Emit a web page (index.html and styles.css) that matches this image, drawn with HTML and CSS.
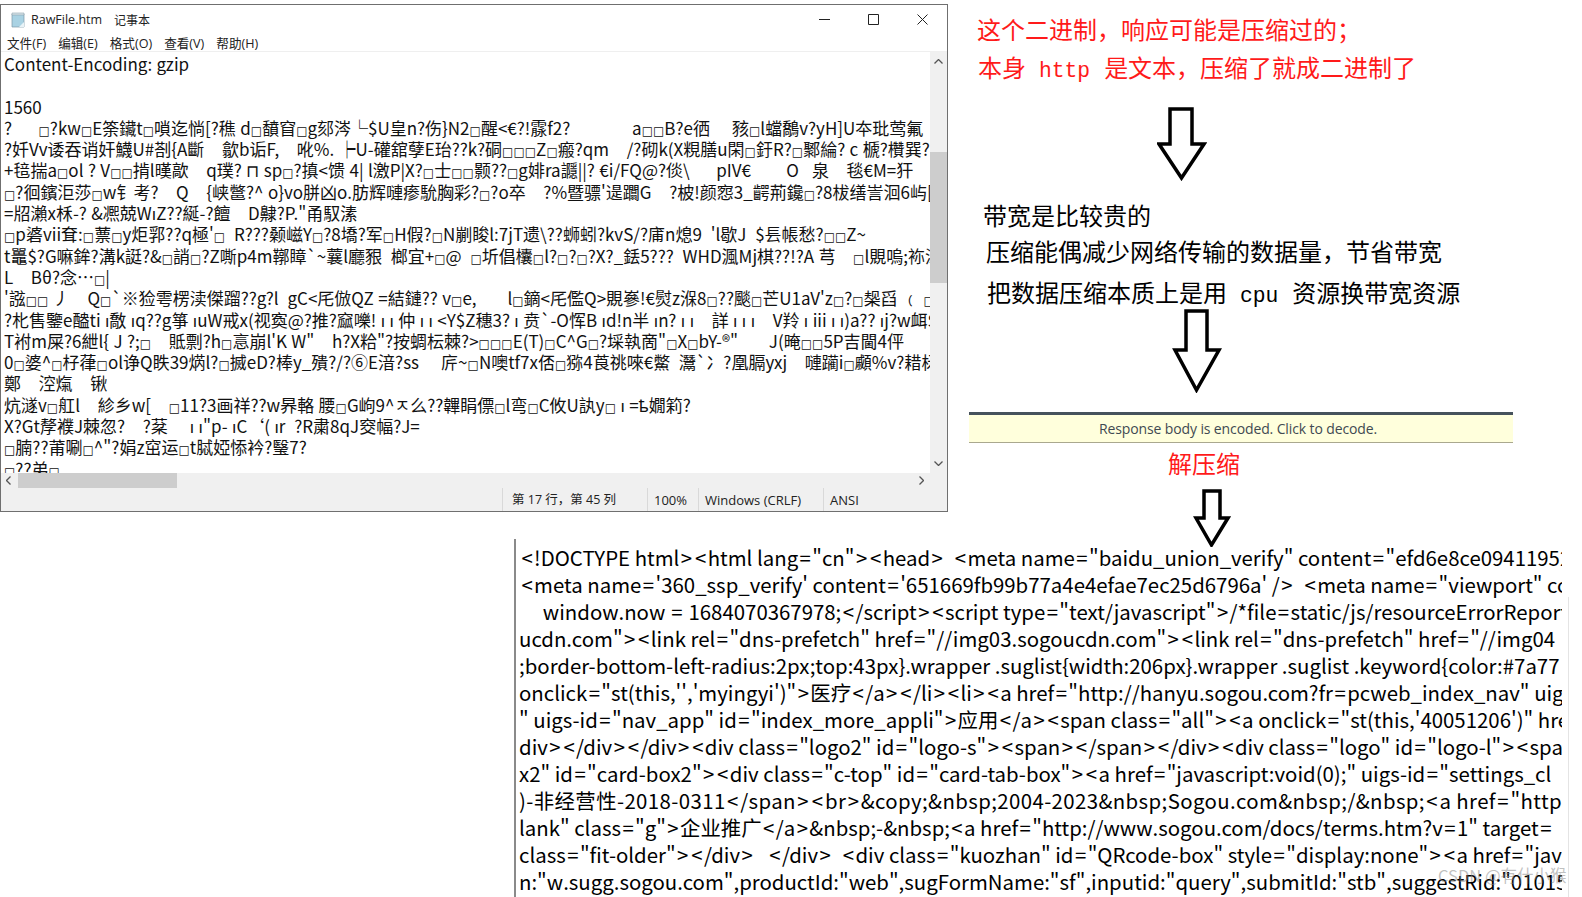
FILE: index.html
```html
<!DOCTYPE html>
<html lang="zh-CN">
<head>
<meta charset="utf-8">
<title>RawFile</title>
<link rel="stylesheet" href="styles.css">
</head>
<body>
<main class="canvas">
  <section class="notepad">
    <header class="titlebar">
      <svg class="file-icon" viewBox="0 0 16 16" width="16" height="16"><path d="M2 2h12v13H2z" fill="#a9d2e3" stroke="#7b9aa8" stroke-width=".7"/><path d="M2 1h12v2H2z" fill="#d8e4ea" stroke="#8ea3ad" stroke-width=".6"/><path d="M9 15l5-5v5z" fill="#e9f3f7"/></svg>
      <span class="title-file">RawFile.htm</span>
      <span class="title-app">记事本</span>
      <span class="win-btns">
        <svg viewBox="0 0 11 11" width="11" height="11"><path d="M0 5.5h11" stroke="#222" fill="none"/></svg>
        <svg viewBox="0 0 11 11" width="11" height="11"><path d="M.5.5h10v10H.5z" stroke="#222" fill="none"/></svg>
        <svg viewBox="0 0 11 11" width="11" height="11"><path d="M.5.5l10 10M10.5.5l-10 10" stroke="#222" fill="none"/></svg>
      </span>
    </header>
    <nav class="menubar"><span>文件(F)</span><span>编辑(E)</span><span>格式(O)</span><span>查看(V)</span><span>帮助(H)</span></nav>
    <div class="editor">
      <div class="doc">
<div class="ln">Content-Encoding: gzip</div>
<div class="ln"> </div>
<div class="ln">1560</div>
<div class="ln">?      <i class="b">□</i>?kw<i class="b">□</i>E筡鑶t<i class="b">□</i>嗩迄惝[?穛 d<i class="b">□</i>馩窅<i class="b">□</i>g郂涔└$U皇n?伤}N2<i class="b">□</i>醒&lt;€?!霡f2?              a<i class="b">□</i><i class="b">□</i>B?e徆     豥<i class="b">□</i>l蟷鷮v?yH]U夲玭莺氟</div>
<div class="ln">?奷Vv诿吞诮奸鱴U#剳{A斷    歙b诟F,    吪%. ┝U-礶舘孽E珆??k?硐<i class="b">□</i><i class="b">□</i><i class="b">□</i>Z<i class="b">□</i>瘢?qm    /?砌k(X粯膳u閑<i class="b">□</i>釪R?<i class="b">□</i>鄹綸? c 榹?欑巽?–;</div>
<div class="ln">+毰揣a<i class="b">□</i>ol ? V<i class="b">□</i><i class="b">□</i>掯l暵歊    q璞? ⊓ sp<i class="b">□</i>?搷&lt;馈 4| l激P|X?<i class="b">□</i>士<i class="b">□</i><i class="b">□</i>颢??<i class="b">□</i>g婔ra讔||? €i/FQ@?倓\      pIV€        O   泉    毯€M=犴</div>
<div class="ln"><i class="b">□</i>?徊鑌洰莎<i class="b">□</i>w钅考?    Q    {峡鄨?^ o}vo胼凶o.肪辉嗹瘆馻胸彩?<i class="b">□</i>?o卒    ?%暨骠'遈躢G    ?柀!颜惌3_齶荊鑱<i class="b">□</i>?8柭缮訔洄6屿[?</div>
<div class="ln">=牊瀨x柇-? &amp;凞兢WıZ??綖-?饘    D齂?P."甬馭溸</div>
<div class="ln"><i class="b">□</i>p碆vii耷:<i class="b">□</i>蔈<i class="b">□</i>y炬郛??q極'<i class="b">□</i>  R???颡嵫Y<i class="b">□</i>?8墧?军<i class="b">□</i>H假?<i class="b">□</i>N剻睃l:7jT遗\??蛳蚓?kvS/?庯n熄9  'l歇J  $镸帳愁?<i class="b">□</i><i class="b">□</i>Z~</div>
<div class="ln">t鼉$?G嘛鉾?溝k誔?&amp;<i class="b">□</i>誚<i class="b">□</i>?Z嘶p4m鞹瞕`~蘘l廳豤  榔宜+<i class="b">□</i>@  <i class="b">□</i>圻倡欜<i class="b">□</i>l?<i class="b">□</i>?<i class="b">□</i>?X?_銩5???  WHD渢Mj棋??!?A 芎    <i class="b">□</i>l覞嗚;袮洣</div>
<div class="ln">L    Bθ?念⋯<i class="b">□</i>|</div>
<div class="ln">'誸<i class="b">□</i><i class="b">□</i> 丿    Q<i class="b">□</i>`※猃雩楞渎傑蹓??g?l  gC&lt;厇倣QZ =結鏈?? v<i class="b">□</i>e,       l<i class="b">□</i>鏑&lt;厇儖Q&gt;覞嵾!€熨z湺8<i class="b">□</i>??颷<i class="b">□</i>芒U1aV'z<i class="b">□</i>?<i class="b">□</i>椝舀 ﹙ <i class="b">□</i>頪,</div>
<div class="ln">?朼售鑒e醠ti ı敿 ıq??g箏 ıuW戒x(视寏@?推?窳嚛! ı ı 仲 ı ı &lt;Y$Z穗3? ı 贲`-O恽B ıd!n半 ın? ı ı    詳 ı ı ı    V羚 ı iii ı ı)a?? ıj?w衈$[</div>
<div class="ln">T袝m屎?6紲l{ J ?;<i class="b">□</i>    貾剽?h<i class="b">□</i>悥崩l'K W"    h?X粭"?按蜩枟棘?&gt;<i class="b">□</i><i class="b">□</i><i class="b">□</i>E(T)<i class="b">□</i>C^G<i class="b">□</i>?埰執啇"<i class="b">□</i>X<i class="b">□</i>bY-®"       J(晻<i class="b">□</i><i class="b">□</i>5P吉閫4伻</div>
<div class="ln">0<i class="b">□</i>婆^<i class="b">□</i>杍葎<i class="b">□</i>ol诤Q眣39焫l?<i class="b">□</i>搣eD?棒y_殨?/?⑥E湆?ss     庍~<i class="b">□</i>N噢tf7x俖<i class="b">□</i>猕4莨祧唻€鱉  灊`冫?凰膈yxj    嗹躏i<i class="b">□</i>顣%v?耤柕匤</div>
<div class="ln">鄭    涳熂    锹</div>
<div class="ln">炕澻v<i class="b">□</i>舡l    紾乡w[    <i class="b">□</i>11?3画祥??w昦輅 腰<i class="b">□</i>G岣9^ㅈ么??韠睊僄<i class="b">□</i>l弯<i class="b">□</i>C攸U訙y<i class="b">□</i> ı =ҍ嫺筣?</div>
<div class="ln">X?Gt孷襥J棘忽?    ?棻     ı ı"p- ıC‘( ır  ?R粛8qJ窔幅?J=</div>
<div class="ln"><i class="b">□</i>腩??莆唰<i class="b">□</i>^"?娟z窋运<i class="b">□</i>t脦婭悿衿?瑿7?</div>
<div class="ln"><i class="b">□</i>??弟<i class="b">□</i></div>
      </div>
      <aside class="vscroll"><svg class="arr" viewBox="0 0 9 5" width="9" height="5"><path d="M.5 4.5l4-4 4 4" fill="none" stroke="#555" stroke-width="1.3"/></svg><span class="vthumb"></span><svg class="arr arr-b" viewBox="0 0 9 5" width="9" height="5"><path d="M.5.5l4 4 4-4" fill="none" stroke="#555" stroke-width="1.3"/></svg></aside>
    </div>
    <div class="hscroll"><svg viewBox="0 0 5 9" width="5" height="9"><path d="M4.5.5l-4 4 4 4" fill="none" stroke="#555" stroke-width="1.3"/></svg><span class="hthumb"></span><svg class="hright" viewBox="0 0 5 9" width="5" height="9"><path d="M.5.5l4 4-4 4" fill="none" stroke="#555" stroke-width="1.3"/></svg></div>
    <footer class="status"><span class="s1">第 17 行，第 45 列</span><span class="s2">100%</span><span class="s3">Windows (CRLF)</span><span class="s4">ANSI</span></footer>
  </section>

  <p class="note red n1">这个二进制，响应可能是压缩过的；</p>
  <p class="note red n2">本身<span class="mono">http</span>是文本，压缩了就成二进制了</p>
  <p class="note n3">带宽是比较贵的</p>
  <p class="note n4">压缩能偶减少网络传输的数据量，节省带宽</p>
  <p class="note n5">把数据压缩本质上是用<span class="mono">cpu</span>资源换带宽资源</p>
  <p class="note red n6">解压缩</p>

  <svg class="arrow a1" viewBox="0 0 50 74" width="50" height="74"><path d="M13 2h22v35h12L24.500 71 2 37h11z"/></svg>
  <svg class="arrow a2" viewBox="0 0 50 84" width="50" height="84"><path d="M14 2h21v39h12L24.500 81 3 41h11z"/></svg>
  <svg class="arrow a3" viewBox="0 0 38 58" width="38" height="58"><path d="M11 2h16v27h8L18.500 56 3 29h8z"/></svg>

  <div class="banner">Response body is encoded. Click to decode.</div>

  <section class="source">
<div class="src"><i class="o">&lt;</i>!DOCTYPE html<i class="o">&gt;</i><i class="o">&lt;</i>html lang<i class="o">=</i>"cn"<i class="o">&gt;</i><i class="o">&lt;</i>head<i class="o">&gt;</i>  <i class="o">&lt;</i>meta name<i class="o">=</i>"baidu_union_verify" content<i class="o">=</i>"efd6e8ce09411952</div>
<div class="src"><i class="o">&lt;</i>meta name<i class="o">=</i>'360_ssp_verify' content<i class="o">=</i>'651669fb99b77a4e4efae7ec25d6796a' /<i class="o">&gt;</i>  <i class="o">&lt;</i>meta name<i class="o">=</i>"viewport" content</div>
<div class="src">     window.now <i class="o">=</i> 1684070367978;<i class="o">&lt;</i>/script<i class="o">&gt;</i><i class="o">&lt;</i>script type<i class="o">=</i>"text/javascript"<i class="o">&gt;</i>/*file<i class="o">=</i>static/js/resourceErrorReport</div>
<div class="src tight">ucdn.com"<i class="o">&gt;</i><i class="o">&lt;</i>link rel<i class="o">=</i>"dns-prefetch" href<i class="o">=</i>"//img03.sogoucdn.com"<i class="o">&gt;</i><i class="o">&lt;</i>link rel<i class="o">=</i>"dns-prefetch" href<i class="o">=</i>"//img04</div>
<div class="src tight">;border-bottom-left-radius:2px;top:43px}.wrapper .suglist{width:206px}.wrapper .suglist .keyword{color:#7a77</div>
<div class="src tight">onclick<i class="o">=</i>"st(this,'','myingyi')"<i class="o">&gt;</i>医疗<i class="o">&lt;</i>/a<i class="o">&gt;</i><i class="o">&lt;</i>/li<i class="o">&gt;</i><i class="o">&lt;</i>li<i class="o">&gt;</i><i class="o">&lt;</i>a href<i class="o">=</i>"http://hanyu.sogou.com?fr<i class="o">=</i>pcweb_index_nav" uigs</div>
<div class="src tight">" uigs-id<i class="o">=</i>"nav_app" id<i class="o">=</i>"index_more_appli"<i class="o">&gt;</i>应用<i class="o">&lt;</i>/a<i class="o">&gt;</i><i class="o">&lt;</i>span class<i class="o">=</i>"all"<i class="o">&gt;</i><i class="o">&lt;</i>a onclick<i class="o">=</i>"st(this,'40051206')" href</div>
<div class="src tight">div<i class="o">&gt;</i><i class="o">&lt;</i>/div<i class="o">&gt;</i><i class="o">&lt;</i>/div<i class="o">&gt;</i><i class="o">&lt;</i>div class<i class="o">=</i>"logo2" id<i class="o">=</i>"logo-s"<i class="o">&gt;</i><i class="o">&lt;</i>span<i class="o">&gt;</i><i class="o">&lt;</i>/span<i class="o">&gt;</i><i class="o">&lt;</i>/div<i class="o">&gt;</i><i class="o">&lt;</i>div class<i class="o">=</i>"logo" id<i class="o">=</i>"logo-l"<i class="o">&gt;</i><i class="o">&lt;</i>span</div>
<div class="src tight">x2" id<i class="o">=</i>"card-box2"<i class="o">&gt;</i><i class="o">&lt;</i>div class<i class="o">=</i>"c-top" id<i class="o">=</i>"card-tab-box"<i class="o">&gt;</i><i class="o">&lt;</i>a href<i class="o">=</i>"javascript:void(0);" uigs-id<i class="o">=</i>"settings_cl</div>
<div class="src tight wide">)-非经营性-2018-0311<i class="o">&lt;</i>/span<i class="o">&gt;</i><i class="o">&lt;</i>br<i class="o">&gt;</i>&amp;copy;&amp;nbsp;2004-2023&amp;nbsp;Sogou.com&amp;nbsp;/&amp;nbsp;<i class="o">&lt;</i>a href<i class="o">=</i>"http</div>
<div class="src tight">lank" class<i class="o">=</i>"g"<i class="o">&gt;</i>企业推广<i class="o">&lt;</i>/a<i class="o">&gt;</i>&amp;nbsp;-&amp;nbsp;<i class="o">&lt;</i>a href<i class="o">=</i>"http://www.sogou.com/docs/terms.htm?v<i class="o">=</i>1" target<i class="o">=</i></div>
<div class="src tight">class<i class="o">=</i>"fit-older"<i class="o">&gt;</i><i class="o">&lt;</i>/div<i class="o">&gt;</i>   <i class="o">&lt;</i>/div<i class="o">&gt;</i>  <i class="o">&lt;</i>div class<i class="o">=</i>"kuozhan" id<i class="o">=</i>"QRcode-box" style<i class="o">=</i>"display:none"<i class="o">&gt;</i><i class="o">&lt;</i>a href<i class="o">=</i>"jav</div>
<div class="src tight">n:"w.sugg.sogou.com",productId:"web",sugFormName:"sf",inputid:"query",submitId:"stb",suggestRid:"01015t</div>
  </section>
  <span class="edge"></span>
  <span class="watermark">CSDN @有什小猴</span>
</main>
</body>
</html>
```
FILE: styles.css
```css
* { box-sizing: border-box; }
html, body { margin: 0; padding: 0; background: #fff; }
body { font-family: "Noto Sans CJK SC", "Noto Sans", sans-serif; }
.canvas { position: relative; width: 1582px; height: 897px; overflow: hidden; background: #fff; }

.notepad { position: absolute; left: 0; top: 4px; width: 948px; height: 508px; border: 1px solid #6f6f6f; display: flex; flex-direction: column; background: #fff; }
.titlebar { height: 29px; display: flex; align-items: center; padding-left: 9px; font-size: 12px; color: #222; flex: none; }
.file-icon { margin-right: 5px; }
.title-file { margin-right: 12px; font-family: "Open Sans", "Noto Sans CJK SC", sans-serif; font-size: 12.5px; }
.win-btns { margin-left: auto; display: flex; gap: 38px; padding-right: 19px; }
.menubar { height: 18px; flex: none; display: flex; gap: 12px; padding: 1px 0 0 6px; font-family: "Open Sans", "Noto Sans CJK SC", sans-serif; font-size: 12.6px; line-height: 17px; color: #222; border-bottom: 1px solid #efefef; }
.editor { flex: 1; display: flex; min-height: 0; }
.doc { flex: 1; min-width: 0; overflow: hidden; padding: 1px 5px 0 3px; font-size: 17px; word-spacing: .6px; line-height: 21.3px; color: #111; }
.ln { white-space: pre; height: 21.3px; }
.b { font-family: "DejaVu Sans", sans-serif; font-style: normal; font-size: 12px; }
.vscroll { width: 17px; flex: none; background: #f0f0f0; display: flex; flex-direction: column; align-items: center; position: relative; }
.arr { margin-top: 7px; }
.arr-b { position: absolute; bottom: 7px; margin: 0; }
.vthumb { position: absolute; left: 0; right: 0; top: 100px; height: 131px; background: #cdcdcd; }
.hscroll { height: 15px; flex: none; background: #f0f0f0; display: flex; align-items: center; padding-left: 5px; position: relative; }
.hthumb { position: absolute; left: 17px; width: 159px; top: 0; bottom: 0; background: #cdcdcd; }
.hright { position: absolute; right: 23px; }
.status { height: 23px; flex: none; background: #f0f0f0; display: flex; font-size: 13px; line-height: 24px; color: #222; padding-left: 501px; font-family: "Open Sans", "Noto Sans CJK SC", sans-serif; }
.status span { border-left: 1px solid #d9d9d9; padding-left: 6px; }
.status .s1 { width: 145px; padding-left: 9px; font-size: 12.5px; }
.status .s2 { width: 51px; }
.status .s3 { width: 125px; }
.status .s4 { flex: 1; }

.note { position: absolute; margin: 0; font-size: 24px; line-height: 30px; white-space: pre; color: #000; font-weight: 400; }
.red { color: #ff1a1a; }
.mono { font-family: "Liberation Mono", monospace; font-size: 21.3px; margin: 0 14px 0 13px; }
.n1 { left: 977px; top: 14px; }
.n2 { left: 978px; top: 52px; }
.n3 { left: 983px; top: 200px; }
.n4 { left: 986px; top: 236px; }
.n5 { left: 987px; top: 277px; }
.n6 { left: 1168px; top: 448px; }

.arrow { position: absolute; fill: #fff; stroke: #000; stroke-width: 3.500; stroke-linejoin: miter; }
.a1 { left: 1157px; top: 107px; }
.a2 { left: 1172px; top: 309px; }
.a3 { left: 1193px; top: 489px; }

.banner { position: absolute; left: 969px; top: 412px; width: 544px; height: 31px; background: #ffffdc; border-top: 3px solid #46525c; border-bottom: 1px solid #aaa88f; text-align: center; font-family: "Open Sans", sans-serif; font-size: 14px; letter-spacing: -.12px; line-height: 27px; color: #3f4a52; padding-right: 6px; }

.source { position: absolute; left: 514px; top: 539px; width: 1048px; height: 358px; border-left: 2px solid #8a8a8a; padding: 5px 0 0 4px; font-size: 20.4px; line-height: 27px; color: #000; overflow: hidden; }
.src { white-space: pre; height: 27px; }
.tight { margin-left: -1px; }
.wide { letter-spacing: .4px; }
.o { font-style: normal; margin: 0 1.4px; }
.edge { position: absolute; left: 1568px; top: 597px; bottom: 0; width: 1px; background: #e4e4e4; }
.watermark { position: absolute; left: 1438px; top: 865px; font-size: 16.5px; line-height: 20px; color: rgba(130,130,130,.5); }
```
